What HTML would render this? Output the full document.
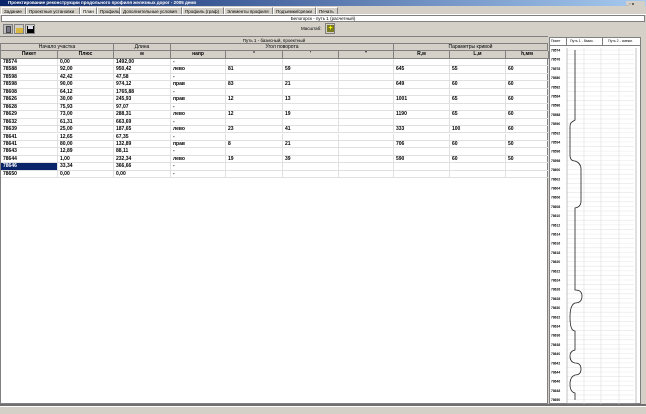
<!DOCTYPE html>
<html><head><meta charset="utf-8"><style>
*{box-sizing:border-box;margin:0;padding:0}
body{width:646px;height:414px;overflow:hidden;background:#d4d0c8;font-family:"Liberation Sans",sans-serif;font-size:5px;font-weight:bold;color:#000;position:relative}
.a{position:absolute}
.tb{left:0;top:0;width:646px;height:6px;background:linear-gradient(90deg,#0a246a,#a6caf0);color:#fff;font-size:4.5px;line-height:6px;padding-left:8px}
.tab{top:7px;height:7px;line-height:7px;font-size:4.5px;font-weight:normal;border:1px solid #fff;border-right-color:#808080;border-bottom:none;padding:0 2px;white-space:nowrap}
.cell{position:absolute;height:7.4px;line-height:7px;border-right:1px solid #e0e0e0;border-bottom:1px solid #e0e0e0;padding-left:2px;white-space:nowrap;overflow:hidden}
.h{background:#d4d0c8;border-right:1px solid #808080;border-bottom:1px solid #808080;text-align:center;padding:0;font-weight:normal}
.h2{font-weight:bold}
</style></head><body>
<div class="a tb">Проектирование реконструкции продольного профиля железных дорог - 2005 демо</div>
<div class="a" style="left:626px;top:1px;width:19px;height:5px;font-size:4px;color:#000;background:#d4d0c8">_ ▫ x</div>
<div class="a tab" style="left:1px;width:25px">Задание</div>
<div class="a tab" style="left:26px;width:54px">Проектные установки</div>
<div class="a tab" style="left:80px;width:17px;background:#e6e3dc">План</div>
<div class="a tab" style="left:97px;width:23px">Профиль</div>
<div class="a tab" style="left:120px;width:62px">Дополнительные условия</div>
<div class="a tab" style="left:182px;width:42px">Профиль (граф)</div>
<div class="a tab" style="left:224px;width:49px">Элементы профиля</div>
<div class="a tab" style="left:273px;width:43px">Подъемки/срезки</div>
<div class="a tab" style="left:316px;width:22px">Печать</div>
<div class="a" style="left:0;top:14px;width:646px;height:1px;background:#fff"></div>
<div class="a" style="left:1px;top:15px;width:644px;height:7px;background:#fff;border:1px solid #808080;text-align:center;line-height:6px;font-size:4.5px;font-weight:normal">Белогорск - путь 1 (расчетный)</div>
<div class="a" style="left:3px;top:24px;width:10px;height:10px;border:1px solid #808080;background:#bbb"><div class="a" style="left:2px;top:1px;width:5px;height:7px;background:#778;border:1px solid #444"></div></div>
<div class="a" style="left:14px;top:24px;width:10px;height:10px;border:1px solid #808080"><div class="a" style="left:1px;top:3px;width:7px;height:5px;background:#d8b840"></div></div>
<div class="a" style="left:25px;top:24px;width:10px;height:10px;border:1px solid #808080"><div class="a" style="left:1px;top:1px;width:7px;height:7px;background:#000"><div class="a" style="left:1px;top:0;width:5px;height:3px;background:#dde"></div></div></div>
<div class="a" style="left:301px;top:26px;font-size:4.5px;font-weight:normal">Масштаб:</div>
<div class="a" style="left:325px;top:23px;width:10px;height:11px;border:1px solid #808080;background:#d4d0c8"><div class="a" style="left:1px;top:1px;width:7px;height:7px;background:#7a7a20;color:#ff0;font-size:7px;line-height:7px;text-align:center">+</div></div>
<div class="a" style="left:0;top:36px;width:548px;height:7px;text-align:center;line-height:7px;font-weight:normal;font-size:4.5px;border-top:1px solid #808080">Путь 1 - базисный, проектный</div>
<div class="a" style="left:0;top:43px;width:548px;height:361px;background:#fff;border:1px solid #808080" id="tbl"></div>
<div class="a" style="left:549px;top:37px;width:92px;height:367px;background:#fff;border:1px solid #808080" id="ch"></div>
<div class="a" style="left:0;top:404px;width:646px;height:2px;background:#707070"></div>
<div class="a" style="left:0;top:406px;width:646px;height:8px;background:#d4d0c8;border-top:1px solid #fff"></div>
<script>
var t=document.getElementById('tbl');
var cx=[0,57,113,170,225,282,338,393,449,505,548];
function c(x,y,w,h,txt,cls,st){var d=document.createElement('div');d.className='cell '+(cls||'');d.style.left=x+'px';d.style.top=y+'px';d.style.width=w+'px';d.style.height=h+'px';d.textContent=txt;if(st)d.style.cssText+=st;t.appendChild(d);}
c(0,0,113,7,'Начало участка','h');c(113,0,57,7,'Длина','h');c(170,0,223,7,'Угол поворота','h');c(393,0,154,7,'Параметры кривой','h');
var h2=['Пикет','Плюс','м','напр','°',"'",'"','R,м','L,м','h,мм'];
for(var i=0;i<10;i++)c(cx[i],7,cx[i+1]-cx[i],8,h2[i],'h h2');
var rows=[['78574','0,00','1492,00','-'],['78588','92,00','950,42','лево','81','59','','645','55','60'],['78598','42,42','47,58','-'],['78598','90,00','974,12','прав','83','21','','649','60','60'],['78608','64,12','1765,88','-'],['78626','30,00','245,93','прав','12','13','','1001','65','60'],['78628','75,93','97,07','-'],['78629','73,00','288,31','лево','12','19','','1190','65','60'],['78632','61,31','663,69','-'],['78639','25,00','187,65','лево','23','41','','333','100','60'],['78641','12,65','67,35','-'],['78641','80,00','132,89','прав','8','21','','706','60','50'],['78643','12,89','88,11','-'],['78644','1,00','232,34','лево','19','39','','590','60','50'],['78646','33,34','366,66','-'],['78650','0,00','0,00','-']];
for(var r=0;r<rows.length;r++){var y=15+r*7.45;for(var i=0;i<10;i++){var st=(r==14&&i==0)?'background:#0a246a;color:#fff':'';c(cx[i],y,cx[i+1]-cx[i],7.45,rows[r][i]||'','',st);}}
var ch=document.getElementById('ch');
var s='<div style="position:absolute;left:0;top:0;width:90px;height:8px;border-bottom:1px solid #808080;font-size:3.5px;font-weight:normal;line-height:7px"><span style="position:absolute;left:1px">Пикет</span><span style="position:absolute;left:16px;border-left:1px solid #808080;padding-left:3px;width:36px">Путь 1 - базис.</span><span style="position:absolute;left:52px;border-left:1px solid #808080;padding-left:5px">Путь 2 - смежн.</span></div>';
s+='<svg width="92" height="360" style="position:absolute;left:0;top:8px" xmlns="http://www.w3.org/2000/svg">';
for(var k=0;k<39;k++){var y=4+k*9.2;s+='<text x="1" y="'+(y+1.5)+'" font-size="3.3" font-family="Liberation Sans" font-weight="bold">'+(78574+2*k)+'</text>';s+='<line x1="17" x2="84" y1="'+(y+4.6)+'" y2="'+(y+4.6)+'" stroke="#e4e4e4" stroke-width="0.6"/><line x1="17" x2="84" y1="'+y+'" y2="'+y+'" stroke="#eee" stroke-width="0.6"/>';}
[17,34,51,69,86].forEach(function(x){s+='<line x1="'+x+'" x2="'+x+'" y1="2" y2="358" stroke="'+(x==17||x==86?'#999':'#ddd')+'" stroke-width="0.6"/>';});
var o=-45;function Y(v){return v+o;}
var p='M25 '+Y(49)+' L25 '+Y(119)+' L22 '+Y(121)+' Q20 '+Y(122)+' 20 '+Y(126)+' L20 '+Y(154)+' Q20 '+Y(160)+' 25 '+Y(160)+' Q31 '+Y(162)+' 31 '+Y(168)+' L31 '+Y(200)+' Q31 '+Y(206)+' 25 '+Y(207)+' L25 '+Y(289)+' Q32 '+Y(289)+' 32 '+Y(295)+' Q32 '+Y(302)+' 25 '+Y(302)+' Q20 '+Y(304)+' 20 '+Y(316)+' Q20 '+Y(330)+' 25 '+Y(330)+' L25 '+Y(349)+' Q20 '+Y(350)+' 20 '+Y(355)+' Q20 '+Y(361)+' 25 '+Y(362)+' Q31 '+Y(362)+' 31 '+Y(368)+' Q31 '+Y(374)+' 25 '+Y(374)+' Q20 '+Y(376)+' 20 '+Y(383)+' Q20 '+Y(391)+' 25 '+Y(392)+' L25 '+Y(399);
s+='<path d="'+p+'" fill="none" stroke="#222" stroke-width="0.8"/></svg>';
ch.innerHTML=s;
</script>
</body></html>
